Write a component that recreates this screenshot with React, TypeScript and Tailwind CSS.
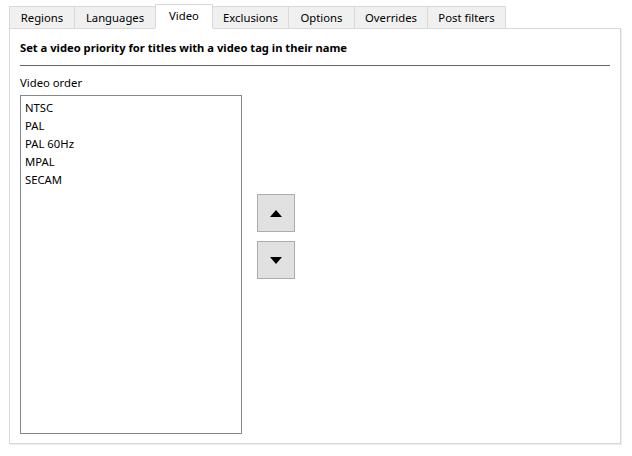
import { useState } from "react";

const TABS = [
  { name: "Regions", w: "w-[66px]" },
  { name: "Languages", w: "w-[82px]" },
  { name: "Video", w: "w-[58px]" },
  { name: "Exclusions", w: "w-[77px]" },
  { name: "Options", w: "w-[67px]" },
  { name: "Overrides", w: "w-[74px]" },
  { name: "Post filters", w: "w-[79px]" },
];

const VIDEO_ORDER = ["NTSC", "PAL", "PAL 60Hz", "MPAL", "SECAM"];

export default function App() {
  const [active, setActive] = useState("Video");
  const [items] = useState(VIDEO_ORDER);

  return (
    <div className="w-[632px] h-[456px] bg-white text-[11.3px] text-black font-['Noto_Sans','Liberation_Sans',sans-serif]">
      {/* tab strip */}
      <div className="flex items-end h-[28px] pl-[9px]">
        {TABS.map((t) => {
          const sel = t.name === active;
          return (
            <button
              key={t.name}
              onClick={() => setActive(t.name)}
              className={`${t.w} shrink-0 border border-[#d9d9d9] -ml-px first:ml-0 flex items-center justify-center leading-none ${
                sel
                  ? "h-[25px] bg-white border-b-white relative z-10 -mb-px pb-[2px]"
                  : "h-[22px] bg-[#f0f0f0] border-b-0"
              }`}
            >
              {t.name}
            </button>
          );
        })}
      </div>

      {/* panel */}
      <div className="ml-[9px] w-[612px] h-[416px] border border-[#d9d9d9] shadow-[1px_1px_0_#ececec] bg-white px-[10px] pt-[11px]">
        <div className="font-bold leading-[16px] text-[11.2px]">
          Set a video priority for titles with a video tag in their name
        </div>
        <div className="mt-[9px] h-px bg-[#646464]" />
        <div className="mt-[9px] leading-[16px]">Video order</div>
        <div className="mt-[4px] flex gap-[15px]">
          <ul className="w-[222px] h-[339px] border border-[#828790] pt-[3px] pl-[4px]">
            {items.map((v) => (
              <li key={v} className="leading-[18px]">
                {v}
              </li>
            ))}
          </ul>
          <div className="flex flex-col gap-[9px] pt-[99px]">
            <button className="w-[38px] h-[38px] bg-[#e1e1e1] border border-[#adadad] flex items-center justify-center">
              <svg width="12" height="7" viewBox="0 0 12 7">
                <path d="M6 0 L12 7 L0 7 Z" fill="#000" />
              </svg>
            </button>
            <button className="w-[38px] h-[38px] bg-[#e1e1e1] border border-[#adadad] flex items-center justify-center">
              <svg width="12" height="7" viewBox="0 0 12 7">
                <path d="M0 0 L12 0 L6 7 Z" fill="#000" />
              </svg>
            </button>
          </div>
        </div>
      </div>
    </div>
  );
}
